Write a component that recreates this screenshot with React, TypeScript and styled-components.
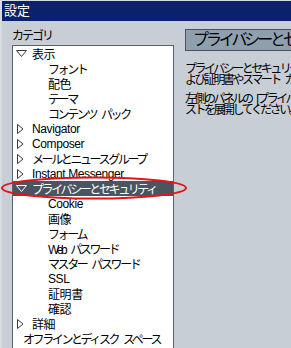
import React from 'react';
import styled, { createGlobalStyle } from 'styled-components';

const GlobalStyle = createGlobalStyle`
  html, body {
    margin: 0;
    padding: 0;
    width: 291px;
    height: 348px;
    overflow: hidden;
    background: #d6dbe2;
  }
`;

const Window = styled.div`
  position: relative;
  width: 289px;
  height: 347px;
  padding: 1px 0 0 2px;
  font-family: "Liberation Sans", "Noto Sans CJK JP", sans-serif;
  font-size: 12px;
  color: #000;
  overflow: hidden;
`;

const TitleBar = styled.div`
  height: 20px;
  background: #0b216b;
  color: #fff;
  font-size: 13px;
  line-height: 20px;
  padding-left: 2px;
`;

const Body = styled.div`
  display: grid;
  grid-template-columns: 162px 1fr;
  column-gap: 11px;
  padding: 8px 0 0 10px;
  height: 340px;
  background: #c8ced6;
`;

const LeftCol = styled.div`
  display: flex;
  flex-direction: column;
`;

const Caption = styled.div`
  height: 16px;
  line-height: 15px;
  letter-spacing: -2px;
`;

const Tree = styled.div`
  border: 1px solid #5b626b;
  background: #fff;
  height: 400px;
`;

const Row = styled.div<{ $indent: number; $selected?: boolean; $kana?: boolean }>`
  height: 15px;
  display: flex;
  align-items: center;
  padding-left: ${({ $indent }) => $indent}px;
  background: ${({ $selected }) => ($selected ? '#4b5560' : 'transparent')};
  color: ${({ $selected }) => ($selected ? '#fff' : '#000')};
  letter-spacing: ${({ $kana }) => ($kana ? '-2.4px' : '-0.4px')};
  word-spacing: ${({ $kana }) => ($kana ? '4px' : '0')};
  white-space: pre;
`;

const Twisty = styled.span`
  width: 16px;
  flex: none;
  display: inline-flex;
  align-items: center;
`;

const RightCol = styled.div`
  display: flex;
  flex-direction: column;
  overflow: hidden;
`;

const Header = styled.div`
  height: 20px;
  width: 260px;
  border: 1px solid #4a525b;
  background: #8e9fad;
  font-size: 16px;
  line-height: 20px;
  padding-left: 7px;
  letter-spacing: -3.1px;
  white-space: nowrap;
`;

const Desc = styled.p`
  margin: 13px 0 0 0;
  font-size: 12px;
  line-height: 11px;
  letter-spacing: -2.5px;
  word-spacing: 4px;
  white-space: nowrap;

  & + & {
    margin-top: 8px;
  }
`;

const Ring = styled.svg`
  position: absolute;
  left: 0;
  top: 176px;
  pointer-events: none;
`;

type Item = { label: string; level: number; twisty?: 'open' | 'closed'; selected?: boolean };

const items: Item[] = [
  { label: '表示', level: 0, twisty: 'open' },
  { label: 'フォント', level: 1 },
  { label: '配色', level: 1 },
  { label: 'テーマ', level: 1 },
  { label: 'コンテンツ パック', level: 1 },
  { label: 'Navigator', level: 0, twisty: 'closed' },
  { label: 'Composer', level: 0, twisty: 'closed' },
  { label: 'メールとニュースグループ', level: 0, twisty: 'closed' },
  { label: 'Instant Messenger', level: 0, twisty: 'closed' },
  { label: 'プライバシーとセキュリティ', level: 0, twisty: 'open', selected: true },
  { label: 'Cookie', level: 1 },
  { label: '画像', level: 1 },
  { label: 'フォーム', level: 1 },
  { label: 'Web パスワード', level: 1 },
  { label: 'マスター パスワード', level: 1 },
  { label: 'SSL', level: 1 },
  { label: '証明書', level: 1 },
  { label: '確認', level: 1 },
  { label: '詳細', level: 0, twisty: 'closed' },
  { label: 'オフラインとディスク スペース', level: 0 },
];

const hasKana = (s: string) => /[\u3040-\u30ff]/.test(s);

const Arrow: React.FC<{ open: boolean; light?: boolean }> = ({ open, light }) => {
  const stroke = light ? '#fff' : '#3a3a3a';
  return open ? (
    <svg width="11" height="7" viewBox="0 0 11 7">
      <polygon points="0.5,0.5 10.5,0.5 5.5,6.5" fill="none" stroke={stroke} />
    </svg>
  ) : (
    <svg width="8" height="10" viewBox="0 0 8 10">
      <polygon points="1.5,0.5 7,5 1.5,9.5" fill="none" stroke={stroke} />
    </svg>
  );
};

const indentFor = (it: Item) => {
  if (it.level === 1) return 35;
  if (it.twisty) return 3;
  return 10;
};

const App: React.FC = () => {
  return (
    <>
      <GlobalStyle />
      <Window>
        <TitleBar>設定</TitleBar>
        <Body>
          <LeftCol>
            <Caption>カテゴリ</Caption>
            <Tree>
              {items.map((it) => (
                <Row
                  key={it.label}
                  $indent={indentFor(it)}
                  $selected={it.selected}
                  $kana={hasKana(it.label)}
                >
                  {it.twisty && (
                    <Twisty>
                      <Arrow open={it.twisty === 'open'} light={it.selected} />
                    </Twisty>
                  )}
                  {it.label}
                </Row>
              ))}
            </Tree>
          </LeftCol>
          <RightCol>
            <Header>プライバシーとセキュリティ</Header>
            <Desc>
              プライバシーとセキュリティの設定では、Cookie、画像
              <br />
              よび証明書やスマート カードを管理できます。
            </Desc>
            <Desc>
              左側のパネルの [プライバシーとセキュリティ]
              <br />
              ストを展開してください。
            </Desc>
          </RightCol>
        </Body>
        <Ring width="190" height="26" viewBox="0 0 190 26">
          <ellipse cx="94" cy="12" rx="92" ry="10.5" fill="none" stroke="#e3141b" strokeWidth="2" />
        </Ring>
      </Window>
    </>
  );
};

export default App;
